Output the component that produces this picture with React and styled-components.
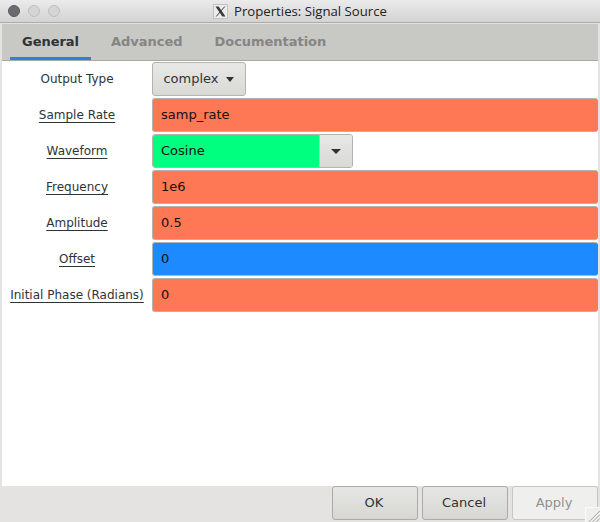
import React from 'react'
import styled, { createGlobalStyle } from 'styled-components'

const GlobalStyle = createGlobalStyle`
    html, body {
        margin: 0;
        padding: 0;
        background: #e4e3e1;
    }
    * {
        box-sizing: border-box;
    }
`

const rows = [
    { label: 'Sample Rate', value: 'samp_rate', color: '#ff7856' },
    { label: 'Waveform', value: 'Cosine', color: '#00ff7f', select: true },
    { label: 'Frequency', value: '1e6', color: '#ff7856' },
    { label: 'Amplitude', value: '0.5', color: '#ff7856' },
    { label: 'Offset', value: '0', color: '#1e8aff' },
    { label: 'Initial Phase (Radians)', value: '0', color: '#ff7856' },
]

const App = () => {
    return (
        <Window>
            <GlobalStyle />
            <TitleBar>
                <Lights>
                    <Light $active />
                    <Light />
                    <Light />
                </Lights>
                <Title>
                    <XIcon viewBox="0 0 15 15">
                        <rect x="0.5" y="0.5" width="14" height="14" fill="#ececec" stroke="#c2c2c2" />
                        <path d="M2.5 2.5h3.2l6.8 10H9.3z" fill="#3a3a3a" />
                        <path d="M11.8 2.5 3.2 12.5" stroke="#3a3a3a" strokeWidth="1" fill="none" />
                    </XIcon>
                    Properties: Signal Source
                </Title>
            </TitleBar>
            <Body>
                <Tabs>
                    <Tab $active>General</Tab>
                    <Tab>Advanced</Tab>
                    <Tab>Documentation</Tab>
                </Tabs>
                <Form>
                    <Row>
                        <Label>Output Type</Label>
                        <DropButton>
                            complex
                            <Caret />
                        </DropButton>
                    </Row>
                    {rows.map((item, index) => {
                        return (
                            <Row key={index}>
                                <Label $link>{item.label}</Label>
                                {item.select ? (
                                    <Combo>
                                        <ComboText $color={item.color}>{item.value}</ComboText>
                                        <ComboArrow>
                                            <Caret $wide />
                                        </ComboArrow>
                                    </Combo>
                                ) : (
                                    <Field $color={item.color}>{item.value}</Field>
                                )}
                            </Row>
                        )
                    })}
                </Form>
            </Body>
            <Footer>
                <Button>OK</Button>
                <Button>Cancel</Button>
                <Button $disabled>Apply</Button>
                <Grip viewBox="0 0 15 15">
                    <path d="M3 15 15 3M7 15l8-8M11 15l4-4" stroke="#9a9a98" strokeWidth="1" fill="none" />
                </Grip>
            </Footer>
        </Window>
    )
}

export default App

const Window = styled.div`
    position: relative;
    width: 600px;
    height: 522px;
    display: flex;
    flex-direction: column;
    overflow: hidden;
    background: #e4e3e1;
    font-family: "DejaVu Sans", sans-serif;
    font-size: 13px;
    color: #2e3436;
`

const TitleBar = styled.div`
    position: relative;
    height: 23px;
    flex: none;
    display: flex;
    align-items: center;
    justify-content: center;
    background: linear-gradient(#ebebeb, #d3d3d3);
    border-bottom: 1px solid #acacac;
`

const Lights = styled.div`
    position: absolute;
    left: 8px;
    top: 5px;
    display: flex;
    gap: 8px;
`

const Light = styled.span`
    width: 12px;
    height: 12px;
    border-radius: 50%;
    background: ${(p) => (p.$active ? '#6b6a70' : '#d6d5d5')};
    border: 1px solid ${(p) => (p.$active ? '#5a595e' : '#c0bfbf')};
`

const Title = styled.div`
    display: flex;
    align-items: center;
    gap: 6px;
    font-family: "Open Sans", sans-serif;
    font-size: 13.2px;
    color: #222;
`

const XIcon = styled.svg`
    width: 15px;
    height: 15px;
`

const Body = styled.div`
    flex: none;
    height: 462px;
    margin: 1px 2px 0;
    background: #fff;
    display: flex;
    flex-direction: column;
`

const Tabs = styled.div`
    height: 37px;
    flex: none;
    display: flex;
    padding-left: 8px;
    gap: 8px;
    background: #c8c8c5;
    border-bottom: 1px solid #a9a9a6;
`

const Tab = styled.div`
    height: 36px;
    padding: 10px 12px 0;
    font-weight: bold;
    font-size: 13px;
    letter-spacing: -0.03px;
    color: ${(p) => (p.$active ? '#2e3436' : '#858583')};
    border-bottom: 3px solid ${(p) => (p.$active ? '#2f7fdc' : 'transparent')};
`

const Form = styled.div`
    display: flex;
    flex-direction: column;
    gap: 2px;
    padding-top: 1px;
`

const Row = styled.div`
    height: 34px;
    display: flex;
    align-items: center;
`

const Label = styled.div`
    width: 150px;
    flex: none;
    text-align: center;
    font-size: 12px;
    text-decoration: ${(p) => (p.$link ? 'underline' : 'none')};
    text-underline-offset: 3px;
`

const DropButton = styled.div`
    width: 94px;
    height: 34px;
    display: flex;
    align-items: center;
    justify-content: center;
    gap: 7px;
    padding: 0 1px 2px 0;
    border: 1px solid #b3b3b0;
    border-radius: 3px;
    background: linear-gradient(#e8e8e6, #d8d8d5);
`

const Caret = styled.span`
    width: 0;
    height: 0;
    margin-top: 2px;
    border-left: ${(p) => (p.$wide ? '5px' : '4.5px')} solid transparent;
    border-right: ${(p) => (p.$wide ? '5px' : '4.5px')} solid transparent;
    border-top: 5px solid #2e3436;
`

const Field = styled.div`
    width: 446px;
    height: 34px;
    display: flex;
    align-items: center;
    padding: 0 0 2px 8px;
    color: #111;
    background: ${(p) => p.$color};
    border: 1px solid #b3b3b0;
    border-width: 1px 0 1px 1px;
    border-radius: 3px;
`

const Combo = styled.div`
    width: 201px;
    height: 34px;
    display: flex;
    border: 1px solid #b3b3b0;
    border-radius: 3px;
    overflow: hidden;
`

const ComboText = styled.div`
    flex: 1;
    display: flex;
    align-items: center;
    padding: 0 0 2px 8px;
    color: #111;
    background: ${(p) => p.$color};
`

const ComboArrow = styled.div`
    width: 33px;
    display: flex;
    align-items: center;
    justify-content: center;
    padding-bottom: 2px;
    border-left: 1px solid #c4c4c1;
    background: linear-gradient(#e8e8e6, #d8d8d5);
`

const Footer = styled.div`
    flex: 1;
    display: flex;
    justify-content: flex-end;
    gap: 4px;
    padding-right: 2px;
    background: #e4e3e1;
`

const Button = styled.div`
    width: 86px;
    height: 34px;
    display: flex;
    align-items: center;
    justify-content: center;
    padding: 0 2px 2px 0;
    border: 1px solid ${(p) => (p.$disabled ? '#c6c6c4' : '#aaaaa7')};
    border-radius: 3px;
    color: ${(p) => (p.$disabled ? '#92928f' : '#2e3436')};
    background: ${(p) => (p.$disabled ? '#efefed' : 'linear-gradient(#e6e6e4, #d6d6d3)')};
`

const Grip = styled.svg`
    position: absolute;
    right: 0;
    bottom: 0;
    width: 15px;
    height: 15px;
    background: #efefed;
    border-top: 1px solid #fafaf9;
    border-left: 1px solid #fafaf9;
`
